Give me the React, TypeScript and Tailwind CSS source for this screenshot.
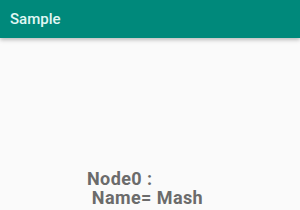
export default function App() {
  return (
    <div className="flex h-[210px] w-[300px] flex-col overflow-hidden bg-[#fafafa] font-['Roboto',sans-serif]">
      <div className="flex h-[38px] shrink-0 items-center bg-[#00897b] px-[10px] shadow-[0_2px_4px_rgba(0,0,0,0.25)]">
        <span className="text-[15px] font-medium text-[#e0f7f4]">Sample</span>
      </div>
      <div className="flex flex-1 flex-col pl-[87px] pt-[132px]">
        <p className="whitespace-pre text-[18px] font-bold leading-[18.5px] tracking-[0.4px] text-[#6b6b6b]">
          {"Node0 :\n Name= Mash"}
        </p>
      </div>
    </div>
  );
}
